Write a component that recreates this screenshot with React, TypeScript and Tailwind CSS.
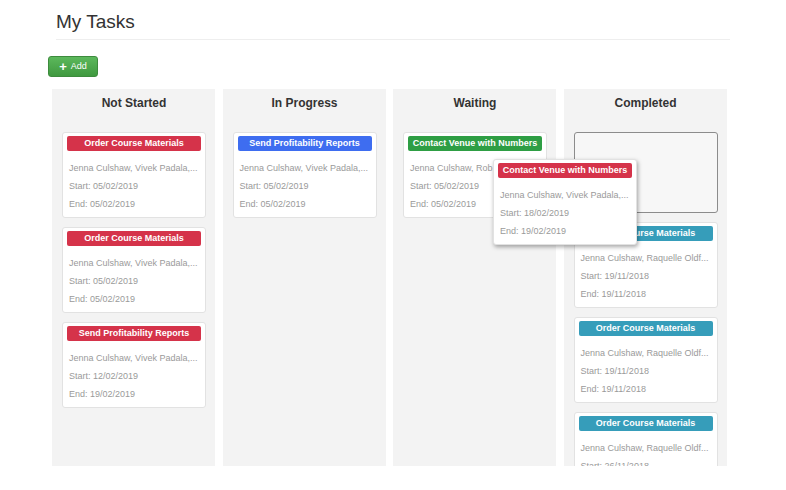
import React from 'react';

type Task = {
  title: string;
  people: string;
  start: string;
  end: string;
};

type Column = {
  name: string;
  label: string;
  tasks: Task[];
  placeholder?: boolean;
};

const columns: Column[] = [
  {
    name: 'Not Started',
    label: 'bg-[#d5334a]',
    tasks: [
      { title: 'Order Course Materials', people: 'Jenna Culshaw, Vivek Padala,...', start: '05/02/2019', end: '05/02/2019' },
      { title: 'Order Course Materials', people: 'Jenna Culshaw, Vivek Padala,...', start: '05/02/2019', end: '05/02/2019' },
      { title: 'Send Profitability Reports', people: 'Jenna Culshaw, Vivek Padala,...', start: '12/02/2019', end: '19/02/2019' },
    ],
  },
  {
    name: 'In Progress',
    label: 'bg-[#3e6df0]',
    tasks: [
      { title: 'Send Profitability Reports', people: 'Jenna Culshaw, Vivek Padala,...', start: '05/02/2019', end: '05/02/2019' },
    ],
  },
  {
    name: 'Waiting',
    label: 'bg-[#2e9e44]',
    tasks: [
      { title: 'Contact Venue with Numbers', people: 'Jenna Culshaw, Rob...', start: '05/02/2019', end: '05/02/2019' },
    ],
  },
  {
    name: 'Completed',
    label: 'bg-[#369dba]',
    placeholder: true,
    tasks: [
      { title: 'Order Course Materials', people: 'Jenna Culshaw, Raquelle Oldf...', start: '19/11/2018', end: '19/11/2018' },
      { title: 'Order Course Materials', people: 'Jenna Culshaw, Raquelle Oldf...', start: '19/11/2018', end: '19/11/2018' },
      { title: 'Order Course Materials', people: 'Jenna Culshaw, Raquelle Oldf...', start: '26/11/2018', end: '26/11/2018' },
    ],
  },
];

const TaskCard: React.FC<{ task: Task; label: string; className?: string }> = ({ task, label, className }) => (
  <div className={'bg-white border border-[#e2e2e2] rounded-[3px] px-[4px] pt-[3px] pb-[4px] ' + (className ?? '')}>
    <div className={'h-[15px] rounded-[2px] flex items-center justify-center text-white font-bold text-[9px] whitespace-nowrap ' + label}>
      {task.title}
    </div>
    <div className="mt-[8px] px-[2px] text-[9px] text-[#9a9a9a] leading-[18px]">
      <div className="whitespace-nowrap">{task.people}</div>
      <div>Start: {task.start}</div>
      <div>End: {task.end}</div>
    </div>
  </div>
);

export default function App() {
  return (
    <div className="w-[786px] h-[490px] bg-white relative overflow-hidden font-['Liberation_Sans',Arial,sans-serif]">
      <div className="pt-[10px] pl-[56px] pr-[56px]">
        <h1 className="text-[19px] leading-[24px] text-[#333]">My Tasks</h1>
        <div className="mt-[5px] h-px bg-[#eeeeee] w-[674px]" />
      </div>

      <div className="pl-[48px] mt-[16px]">
        <button className="h-[21px] w-[50px] rounded-[3px] bg-gradient-to-b from-[#5cb85c] to-[#3f993f] border border-[#3d8b3d] text-white flex items-center justify-center gap-[4px] text-[9px]">
          <span className="font-bold text-[13px] leading-none -mt-[1px]">+</span>
          <span>Add</span>
        </button>
      </div>

      <div className="ml-[52px] mt-[12px] flex gap-[7.5px] h-[377px]">
        {columns.map((col) => (
          <div key={col.name} className="w-[163px] bg-[#f3f3f3] overflow-hidden pl-[10px] pr-[9px]">
            <div className="h-[28px] flex items-center justify-center font-bold text-[12px] text-[#333]">{col.name}</div>
            <div className="mt-[15px] flex flex-col gap-[9px]">
              {col.placeholder && (
                <div className="h-[81px] border border-[#8c8c8c] rounded-[3px] bg-[#f7f7f7]" />
              )}
              {col.tasks.map((t, i) => (
                <TaskCard key={i} task={t} label={col.label} />
              ))}
            </div>
          </div>
        ))}
      </div>

      <TaskCard
        task={{ title: 'Contact Venue with Numbers', people: 'Jenna Culshaw, Vivek Padala,...', start: '18/02/2019', end: '19/02/2019' }}
        label="bg-[#d5334a]"
        className="absolute left-[493px] top-[159px] w-[144px] border-[#bdbdbd] shadow-[1px_2px_4px_rgba(0,0,0,0.35)]"
      />
    </div>
  );
}
